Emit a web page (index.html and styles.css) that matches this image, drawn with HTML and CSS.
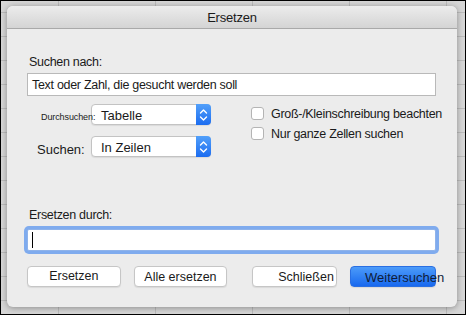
FILE: index.html
```html
<!DOCTYPE html>
<html lang="de">
<head>
    <meta charset="UTF-8">
    <meta name="viewport" content="width=device-width, initial-scale=1.0">
    <title>Ersetzen</title>
    <link rel="stylesheet" href="styles.css">
</head>
<body>

<div class="screen">
    <div class="dialog">
        <div class="titlebar">Ersetzen</div>

        <div class="content">
            <div class="field-label">Suchen nach:</div>
            <div class="textbox">Text oder Zahl, die gesucht werden soll</div>

            <div class="options">
                <div class="selects">
                    <div class="select-row">
                        <span class="small-label">Durchsuchen:</span>
                        <div class="select">
                            <span class="select-text">Tabelle</span>
                            <span class="stepper">
                                <svg width="9" height="14" viewBox="0 0 9 14"><path d="M1.5 5 L4.5 2 L7.5 5 M1.5 9 L4.5 12 L7.5 9" fill="none" stroke="#fff" stroke-width="1.4" stroke-linecap="round" stroke-linejoin="round"/></svg>
                            </span>
                        </div>
                    </div>
                    <div class="select-row second">
                        <span class="row-label">Suchen:</span>
                        <div class="select">
                            <span class="select-text">In Zeilen</span>
                            <span class="stepper">
                                <svg width="9" height="14" viewBox="0 0 9 14"><path d="M1.5 5 L4.5 2 L7.5 5 M1.5 9 L4.5 12 L7.5 9" fill="none" stroke="#fff" stroke-width="1.4" stroke-linecap="round" stroke-linejoin="round"/></svg>
                            </span>
                        </div>
                    </div>
                </div>

                <div class="checks">
                    <label class="check"><span class="box"></span>Groß-/Kleinschreibung beachten</label>
                    <label class="check"><span class="box"></span>Nur ganze Zellen suchen</label>
                </div>
            </div>

            <div class="field-label replace">Ersetzen durch:</div>
            <div class="textbox focused"><span class="caret"></span></div>

            <div class="buttons">
                <button class="btn replace-one">Ersetzen</button>
                <button class="btn replace-all">Alle ersetzen</button>
                <button class="btn close">Schließen</button>
                <button class="btn primary">Weitersuchen</button>
            </div>
        </div>
    </div>
</div>

</body>
</html>
```

FILE: styles.css
```css
body { margin: 0; font-family: "Liberation Sans", Arial, sans-serif; font-size: 13px; color: #1a1a1a; }

.screen {
    width: 466px; height: 315px; box-sizing: border-box;
    border: 1px solid #000;
    background-color: #d6d6d6;
    background-image:
        linear-gradient(to right, #bcbcbc 1px, transparent 1px),
        linear-gradient(to bottom, #bcbcbc 1px, transparent 1px);
    background-size: 97px 24px;
    background-position: 57px 11px;
    overflow: hidden;
}

.dialog {
    margin: 5px 0 0 6px;
    width: 450px; height: 301px;
    background: #ececec;
    border-radius: 6px;
    box-shadow: 0 1px 6px rgba(0, 0, 0, 0.35);
    overflow: hidden;
}

.titlebar {
    height: 21px; line-height: 22px;
    padding-top: 1px;
    text-align: center;
    background: linear-gradient(to bottom, #ececec, #d4d4d4);
    border-bottom: 1px solid #a9a9a9;
    letter-spacing: -0.2px;
}

.content { padding: 0 21px 0 20px; }

.field-label { font-size: 12.5px; letter-spacing: -0.3px; line-height: 16px; margin-top: 25px; margin-bottom: 3px; padding-left: 2px; }
.field-label.replace { margin-top: 50px; margin-bottom: 6px; }

.textbox {
    height: 23px; box-sizing: border-box;
    background: #fff;
    border: 1px solid #b9b9b9;
    padding: 3px 4px 0;
    font-size: 12.5px;
    line-height: 17px;
    letter-spacing: -0.3px;
    white-space: nowrap;
}
.textbox.focused {
    height: 22px;
    border-color: #8fb3ea;
    border-radius: 2px;
    box-shadow: 0 0 0 3px #7fabee;
    padding: 2px 4px;
}
.caret { display: inline-block; width: 1px; height: 16px; background: #000; vertical-align: top; }

.options { display: flex; height: 61px; }

.selects { width: 185px; padding-top: 8px; }
.select-row { display: flex; align-items: center; height: 21px; }
.select-row.second { margin-top: 11px; }

.small-label { font-size: 9px; width: 64px; padding-left: 14px; box-sizing: border-box; margin-top: 4px; letter-spacing: -0.1px; white-space: nowrap; position: relative; z-index: 1; }
.row-label { width: 64px; padding-left: 10px; box-sizing: border-box; margin-top: 6px; }

.select {
    display: flex; width: 120px; height: 21px; box-sizing: border-box;
    background: #fff;
    border: 1px solid #c3c3c3;
    border-radius: 4px;
    box-shadow: 0 1px 1px rgba(0, 0, 0, 0.08);
}
.select-text { flex: 1; padding-left: 9px; line-height: 22px; }
.stepper {
    width: 15px; margin: -1px -1px -1px 0;
    background: linear-gradient(to bottom, #52a0fa, #1b6cf0);
    border-radius: 0 4px 4px 0;
    display: flex; align-items: center; justify-content: center;
}

.checks { margin-left: 40px; padding-top: 11px; }
.check { display: flex; align-items: center; height: 13px; margin-bottom: 7px; font-size: 12.5px; letter-spacing: -0.3px; white-space: nowrap; }
.box {
    width: 13px; height: 13px; box-sizing: border-box;
    background: #fff; border: 1px solid #b4b4b4; border-radius: 3px;
    margin-right: 7px;
}

.buttons { display: flex; margin-top: 15px; }
.btn {
    height: 21px; box-sizing: border-box;
    font-family: inherit; font-size: 12.5px; color: #1a1a1a;
    background: #fff;
    border: 1px solid #c6c6c6; border-radius: 4px;
    box-shadow: 0 1px 1px rgba(0, 0, 0, 0.08);
    padding: 0; line-height: 19px;
    white-space: nowrap;
}
.replace-one { width: 94px; line-height: 17px; }
.replace-all { width: 94px; margin-left: 13px; line-height: 21px; }
.close { width: 85px; margin-left: 25px; text-align: left; padding-left: 25px; line-height: 21px; }
.primary {
    width: 86px; margin-left: 13px;
    text-align: left; padding-left: 14px; line-height: 21px;
    font-size: 13px;
    background: linear-gradient(to bottom, #4c9bf9, #1869ef);
    border-color: #2a6fe2;
    color: #0f1d3a;
    overflow: visible;
}
```
